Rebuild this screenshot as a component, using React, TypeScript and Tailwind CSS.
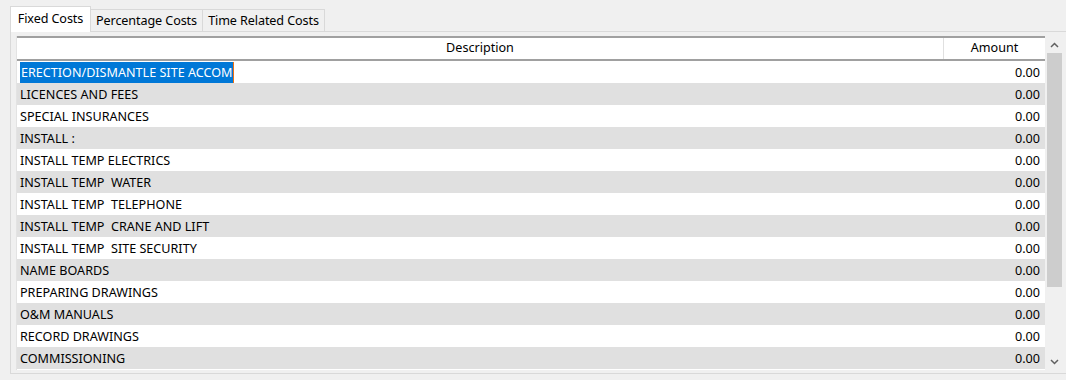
import React from "react";

const rows = [
  "ERECTION/DISMANTLE SITE ACCOM",
  "LICENCES AND FEES",
  "SPECIAL INSURANCES",
  "INSTALL :",
  "INSTALL TEMP ELECTRICS",
  "INSTALL TEMP  WATER",
  "INSTALL TEMP  TELEPHONE",
  "INSTALL TEMP  CRANE AND LIFT",
  "INSTALL TEMP  SITE SECURITY",
  "NAME BOARDS",
  "PREPARING DRAWINGS",
  "O&M MANUALS",
  "RECORD DRAWINGS",
  "COMMISSIONING",
];

export default function App() {
  return (
    <div
      className="w-[1066px] h-[380px] bg-[#f0f0f0] overflow-hidden text-[12.6px] text-black"
      style={{ fontFamily: '"Noto Sans", sans-serif' }}
    >
      <div className="flex items-end h-[31px] pl-[10px] pt-[6px] tracking-[-0.1px]">
        <div className="w-[81px] justify-center bg-white border border-b-0 border-[#d9d9d9] flex items-center relative z-10 mb-[-1px] h-[26px]">
          Fixed Costs
        </div>
        <div className="w-[112px] justify-center h-[22px] pt-[1px] bg-[#f0f0f0] border border-l-0 border-b-0 border-[#d9d9d9] flex items-center">
          Percentage Costs
        </div>
        <div className="w-[122px] justify-center h-[22px] pt-[1px] bg-[#f0f0f0] border border-l-0 border-b-0 border-[#d9d9d9] flex items-center">
          Time Related Costs
        </div>
      </div>
      <div className="ml-[10px] h-[343px] border border-[#d9d9d9] border-r-0 pl-[5px] pt-[4px] pr-[3px] bg-[#f0f0f0]">
        <div className="flex h-[334px] border-l border-[#e3e3e3]">
          <div className="flex-1 flex flex-col bg-white">
            <div className="flex h-[25px] border-t-2 border-b-2 border-[#a0a0a0] bg-white">
              <div className="flex-1 flex items-center justify-center border-r border-[#e0e0e0]">
                Description
              </div>
              <div className="w-[101px] flex items-center justify-center">Amount</div>
            </div>
            {rows.map((r, i) => (
              <div
                key={i}
                className={`flex h-[22px] items-center pt-[2px] ${i % 2 === 1 ? "bg-[#e0e0e0]" : "bg-white"}`}
              >
                <div className="flex-1 pl-[3px]">
                  {i === 0 ? (
                    <span className="bg-[#0078d7] text-white border-r border-[#f07010] px-[1px] py-[2px]">{r}</span>
                  ) : (
                    <span className="whitespace-pre">{r}</span>
                  )}
                </div>
                <div className="w-[101px] text-right pr-[5px]">0.00</div>
              </div>
            ))}
          </div>
          <div className="w-[18px] bg-[#f0f0f0] flex flex-col items-center">
            <div className="h-[17px] flex items-center justify-center text-[#606060]">
              <svg width="9" height="6" viewBox="0 0 9 6">
                <path d="M1 5 L4.5 1.5 L8 5" stroke="#606060" strokeWidth="1.5" fill="none" />
              </svg>
            </div>
            <div className="w-[15px] h-[234px] bg-[#cdcdcd]" />
            <div className="flex-1" />
            <div className="h-[17px] flex items-center justify-center">
              <svg width="9" height="6" viewBox="0 0 9 6">
                <path d="M1 1 L4.5 4.5 L8 1" stroke="#606060" strokeWidth="1.5" fill="none" />
              </svg>
            </div>
          </div>
        </div>
      </div>
    </div>
  );
}
